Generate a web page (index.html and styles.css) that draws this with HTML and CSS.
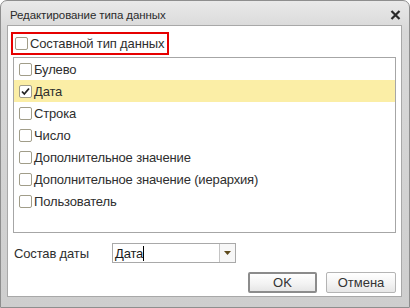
FILE: index.html
```html
<!DOCTYPE html>
<html>
<head>
  <title>Редактирование типа данных</title>
  <link rel="stylesheet" href="styles.css">
</head>
<body>
  <div class="window">
    <!-- Title bar -->
    <div class="titlebar">
      <span class="title">Редактирование типа данных</span>
      <svg class="close" width="11" height="10" viewBox="0 0 11 10">
        <path d="M1.5 1 L9.5 9 M9.5 1 L1.5 9" stroke="#2a2a2a" stroke-width="2.2" fill="none"/>
      </svg>
    </div>

    <div class="client">
      <!-- Composite type flag -->
      <label class="composite"><span class="check"></span>Составной тип данных</label>

      <!-- Type list -->
      <ul class="types">
        <li><span class="check"></span>Булево</li>
        <li class="selected">
          <span class="check">
            <svg width="11" height="11" viewBox="0 0 11 11"><path d="M2 5.5 L4.3 8 L9 2.5" stroke="#222" stroke-width="1.8" fill="none"/></svg>
          </span>Дата
        </li>
        <li><span class="check"></span>Строка</li>
        <li><span class="check"></span>Число</li>
        <li><span class="check"></span>Дополнительное значение</li>
        <li><span class="check"></span>Дополнительное значение (иерархия)</li>
        <li><span class="check"></span>Пользователь</li>
      </ul>

      <!-- Date qualifier -->
      <div class="field-row">
        <span class="field-label">Состав даты</span>
        <div class="combo">
          <span class="combo-value">Дата<span class="caret"></span></span>
          <span class="combo-btn">
            <svg width="7" height="4" viewBox="0 0 7 4"><path d="M0 0 H7 L3.5 4 Z" fill="#5e4a1c"/></svg>
          </span>
        </div>
      </div>

      <div class="buttons">
        <button class="btn default">OK</button>
        <button class="btn">Отмена</button>
      </div>
    </div>
  </div>
</body>
</html>
```

FILE: styles.css
```css
body {
  margin: 0;
  font-family: "Liberation Sans", Arial, sans-serif;
  background: #ffffff;
}
.window {
  width: 410px;
  height: 308px;
  box-sizing: border-box;
  border: 1px solid #8e8e8e;
  border-radius: 7px 7px 0 0;
  background: linear-gradient(#e9e9e9, #d8d8d8 30px, #cecece);
  padding: 0 7px 10px 6px;
  display: flex;
  flex-direction: column;
}
.titlebar {
  height: 24px;
  box-sizing: border-box;
  display: flex;
  align-items: center;
  justify-content: space-between;
  padding: 3px 1px 0 3px;
}
.title {
  font-size: 11.5px;
  color: #2b2b2b;
  letter-spacing: -0.1px;
}
.client {
  flex: 1;
  display: flex;
  flex-direction: column;
  background: #ffffff;
  border: 1px solid #a8a8a8;
  font-size: 13px;
  letter-spacing: -0.15px;
  color: #2e2e2e;
}
.composite {
  align-self: flex-start;
  display: flex;
  align-items: center;
  height: 23px;
  box-sizing: border-box;
  margin: 6px 0 0 3px;
  padding: 0 3px 0 2px;
  border: 2px solid #e60000;
}
.check {
  width: 11px;
  height: 11px;
  border: 1px solid #a19d89;
  border-radius: 2px;
  background: #ffffff;
  margin-right: 2px;
  display: flex;
  align-items: center;
  justify-content: center;
  flex-shrink: 0;
}
.types {
  list-style: none;
  margin: 2px 5px 0 5px;
  padding: 0 0 1px;
  height: 176px;
  box-sizing: border-box;
  border: 1px solid #a6a6a6;
}
.types li {
  height: 22px;
  display: flex;
  align-items: center;
  padding-left: 5px;
}
.types li.selected {
  background: #fbeea6;
}
.field-row {
  display: flex;
  align-items: center;
  margin: 10px 0 0 6px;
  height: 20px;
}
.field-label {
  width: 98px;
}
.combo {
  width: 124px;
  height: 20px;
  box-sizing: border-box;
  border: 1px solid #a9a9a9;
  display: flex;
}
.combo-value {
  flex: 1;
  display: flex;
  align-items: center;
  padding-left: 2px;
  color: #1a1a1a;
}
.caret {
  width: 1px;
  height: 15px;
  background: #000000;
}
.combo-btn {
  width: 15px;
  border-left: 1px solid #c4c4c4;
  background: #f7f7f7;
  display: flex;
  align-items: center;
  justify-content: center;
}
.buttons {
  display: flex;
  justify-content: flex-end;
  gap: 9px;
  margin: 9px 5px 0 0;
}
.btn {
  height: 21px;
  width: 70px;
  box-sizing: border-box;
  font-family: "Liberation Sans", Arial, sans-serif;
  font-size: 13px;
  color: #333333;
  border: 1px solid #b4b4b4;
  border-radius: 2px;
  background: linear-gradient(#ffffff, #f2f2f2 60%, #e6e6e6);
  padding: 0;
}
.btn.default {
  width: 69px;
  border: 2px solid #8c8c8c;
}
```
